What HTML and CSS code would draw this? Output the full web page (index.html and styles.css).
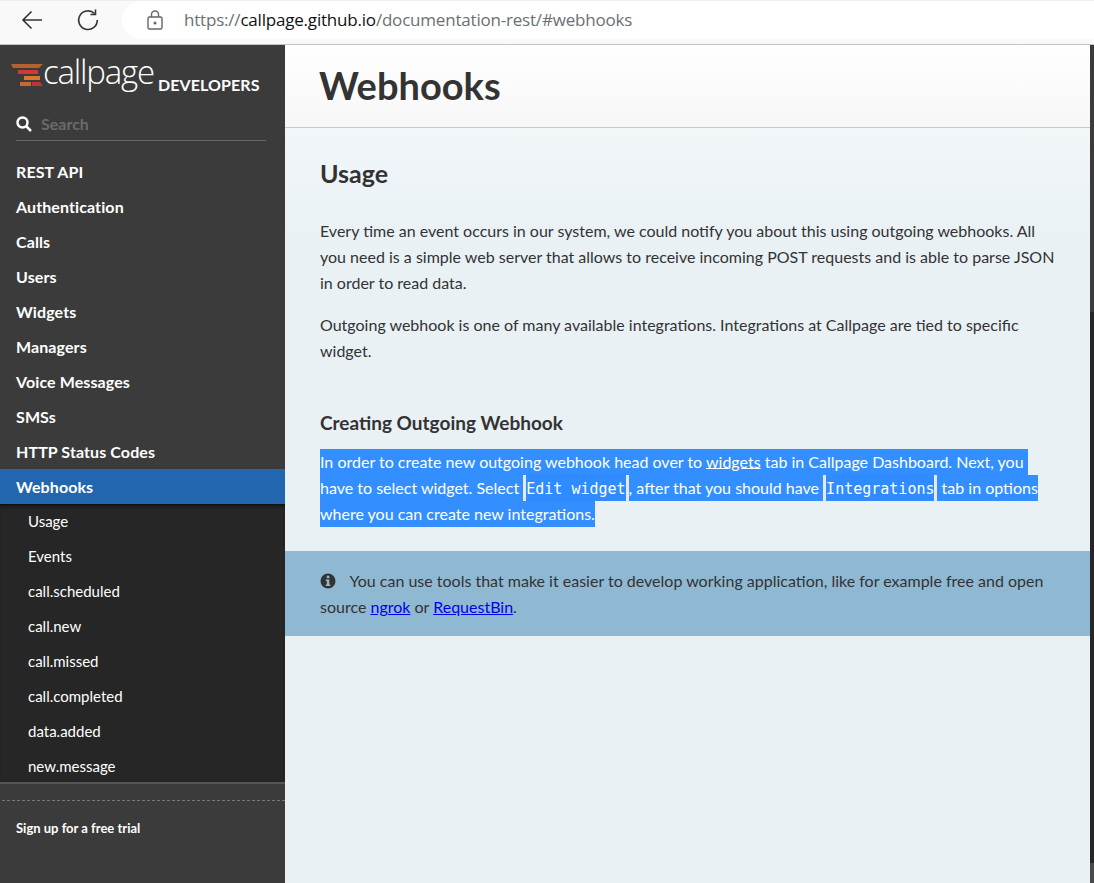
FILE: index.html
```html
<!DOCTYPE html>
<html lang="en">

<head>
    <meta charset="UTF-8">
    <meta name="viewport" content="width=device-width, initial-scale=1.0">
    <title>Webhooks</title>
    <link rel="stylesheet" href="styles.css">
</head>

<body>
    <!-- Browser toolbar -->
    <div class="toolbar">
        <svg class="tool-icon back" width="24" height="24" viewBox="0 0 24 24" fill="none" stroke="#333" stroke-width="1.6">
            <path d="M22 12H3M11.500 3.500L3 12l8.500 8.500" />
        </svg>
        <svg class="tool-icon reload" width="24" height="24" viewBox="0 0 24 24" fill="none" stroke="#333" stroke-width="1.6">
            <path d="M18.500 5.500A9.300 9.300 0 1 0 21.300 12" />
            <path d="M19.500 1.500v5h-5" />
        </svg>
        <div class="address">
            <svg class="lock" width="16" height="20" viewBox="0 0 16 20" fill="none" stroke="#666" stroke-width="1.4">
                <rect x="1" y="7" width="14" height="12" rx="1.500" />
                <path d="M4.500 7V4.500a3.500 3.500 0 0 1 7 0V7" />
                <circle cx="8" cy="13" r="0.800" fill="#666" />
            </svg>
            <span class="url"><span class="url-faded">https://</span>callpage.github.io<span class="url-faded">/documentation-rest/#webhooks</span></span>
        </div>
    </div>

    <div class="page">
        <!-- Sidebar -->
        <nav class="sidebar">
            <div class="logo">
                <svg class="logo-mark" width="33" height="24" viewBox="0 0 33 24">
                    <polygon points="0,0 32,0 28,4 2,4" fill="#b5622f" />
                    <rect x="7" y="6" width="20" height="4" fill="#cf3a35" />
                    <rect x="13" y="12" width="16" height="4" fill="#d9762f" />
                    <rect x="9" y="18" width="11" height="4" fill="#c9682f" />
                    <polygon points="21,18 29,18 32,22 21,22" fill="#c43233" />
                </svg>
                <span class="logo-name">callpage</span>
                <span class="logo-sub">DEVELOPERS</span>
            </div>

            <div class="search">
                <svg width="16" height="16" viewBox="0 0 16 16" fill="none" stroke="#fff" stroke-width="2.500">
                    <circle cx="6.500" cy="6.500" r="5" />
                    <path d="M10.500 10.500L15 15" />
                </svg>
                <span class="search-label">Search</span>
            </div>

            <ul class="menu">
                <li><a href="#">REST API</a></li>
                <li><a href="#">Authentication</a></li>
                <li><a href="#">Calls</a></li>
                <li><a href="#">Users</a></li>
                <li><a href="#">Widgets</a></li>
                <li><a href="#">Managers</a></li>
                <li><a href="#">Voice Messages</a></li>
                <li><a href="#">SMSs</a></li>
                <li><a href="#">HTTP Status Codes</a></li>
                <li><a href="#" class="active">Webhooks</a></li>
            </ul>

            <ul class="submenu">
                <li><a href="#">Usage</a></li>
                <li><a href="#">Events</a></li>
                <li><a href="#">call.scheduled</a></li>
                <li><a href="#">call.new</a></li>
                <li><a href="#">call.missed</a></li>
                <li><a href="#">call.completed</a></li>
                <li><a href="#">data.added</a></li>
                <li><a href="#">new.message</a></li>
            </ul>

            <div class="signup"><a href="#">Sign up for a free trial</a></div>
        </nav>

        <!-- Main content -->
        <main class="content">
            <header class="page-head">
                <h1>Webhooks</h1>
            </header>

            <section class="body">
                <h2>Usage</h2>
                <p>Every time an event occurs in our system, we could notify you about this using outgoing webhooks. All you need is a simple web server that allows to receive incoming POST requests and is able to parse JSON in order to read data.</p>
                <p>Outgoing webhook is one of many available integrations. Integrations at Callpage are tied to specific widget.</p>

                <h3>Creating Outgoing Webhook</h3>
                <p class="selected-text">
                    <span class="sel">In order to create new outgoing webhook head over to <a href="#">widgets</a> tab in Callpage Dashboard. Next, you&nbsp;</span><br>
                    <span class="sel">have to select widget. Select </span><code><span class="sel">Edit widget</span></code><span class="sel">, after that you should have </span><code><span class="sel">Integrations</span></code><span class="sel"> tab in options</span><br>
                    <span class="sel">where you can create new integrations.</span>
                </p>
            </section>

            <aside class="note">
                <svg class="note-icon" width="16" height="16" viewBox="0 0 16 16">
                    <circle cx="8" cy="8" r="7.500" fill="#333" />
                    <rect x="6.800" y="2.800" width="2.600" height="2.400" fill="#8fb8d3" />
                    <path d="M5.800 6.500h3.500v5h1v1.500H5.800v-1.500h1v-3.500h-1z" fill="#8fb8d3" />
                </svg>
                You can use tools that make it easier to develop working application, like for example free and open source <a href="#">ngrok</a> or <a href="#">RequestBin</a>.
            </aside>
        </main>
        <div class="edge"></div>
    </div>
</body>

</html>
```

FILE: styles.css
```css
* {
    box-sizing: border-box;
}

html,
body {
    height: 100%;
}

body {
    margin: 0;
    overflow: hidden;
    display: flex;
    flex-direction: column;
    font-family: Lato, "Liberation Sans", sans-serif;
    font-size: 16px;
    line-height: 26px;
    color: #333;
    background-color: #e9f1f5;
}

/* Browser toolbar */
.toolbar {
    flex: none;
    display: flex;
    align-items: center;
    height: 45px;
    padding-bottom: 5px;
    background-color: #f9f9f9;
    border-top: 1px solid #eee;
    border-bottom: 1px solid #c4c4c4;
}

.tool-icon {
    flex: none;
}

.back {
    margin-left: 20px;
}

.reload {
    margin-left: 32px;
}

.address {
    flex: 1;
    display: flex;
    align-items: center;
    height: 38px;
    margin-left: 22px;
    padding-left: 25px;
    background-color: #fff;
    border-radius: 19px 0 0 19px;
}

.url {
    margin-left: 21px;
    font-family: "Open Sans", sans-serif;
    font-size: 17px;
    letter-spacing: -0.2px;
    color: #111;
}

.url-faded {
    color: #6b6f73;
}

.page {
    flex: 1;
    display: flex;
    min-height: 0;
}

/* Sidebar */
.sidebar {
    flex: none;
    display: flex;
    flex-direction: column;
    width: 285px;
    background-color: #3b3b3b;
    color: #fff;
}

.sidebar a {
    color: #fff;
    text-decoration: none;
}

.logo {
    display: flex;
    align-items: flex-start;
    height: 65px;
    padding: 19px 0 0 11px;
}

.logo-name {
    margin-left: -1px;
    margin-top: -13px;
    font-family: "Open Sans", sans-serif;
    font-weight: 300;
    font-size: 33px;
    line-height: 42px;
    letter-spacing: -1.2px;
}

.logo-sub {
    margin-left: 4px;
    margin-top: 9px;
    font-size: 16px;
    line-height: 24px;
    font-weight: 700;
    letter-spacing: 0.1px;
}

.search {
    display: flex;
    align-items: center;
    gap: 9px;
    height: 31px;
    margin: 0 19px 0 16px;
    padding-bottom: 2px;
    border-bottom: 1px solid #666;
}

.search-label {
    font-size: 16px;
    font-weight: 700;
    color: #6a6a6a;
}

.menu,
.submenu {
    list-style: none;
    margin: 0;
    padding: 0;
}

.menu {
    margin-top: 13px;
}

.menu a {
    display: block;
    height: 35px;
    padding-left: 16px;
    line-height: 35px;
    font-size: 16px;
    font-weight: 700;
    letter-spacing: 0.1px;
}

.menu a.active {
    background-color: #2166ae;
}

.submenu {
    height: 280px;
    background-color: #262626;
    border-top: 1px solid #111;
    border-bottom: 2px solid #555;
    box-shadow: inset 0 4px 4px -3px #111;
}

.submenu a {
    display: block;
    height: 35px;
    padding-left: 28px;
    line-height: 32px;
    font-size: 15px;
}

.signup {
    margin: 16px 0 0 2px;
    padding: 14px 0 0 14px;
    border-top: 1px dashed #777;
    font-size: 13px;
    font-weight: 700;
}

/* Main content */
.content {
    flex: 1;
    min-width: 0;
}

.page-head {
    height: 83px;
    padding: 0 35px;
    background: linear-gradient(#fff, #f7f7f7);
    border-bottom: 1px solid #c8c8c8;
}

h1 {
    margin: 0 0 0 -1px;
    font-size: 38px;
    line-height: 80px;
    font-weight: 700;
}

.body {
    height: 423px;
    padding: 27px 35px 0;
    background: linear-gradient(#f1f6f9, #e9f1f5 120px);
}

h2 {
    margin: 0 0 27px;
    font-size: 25px;
    line-height: 36px;
    font-weight: 700;
}

h3 {
    margin: 45px 0 11px;
    font-size: 19px;
    line-height: 28px;
    font-weight: 700;
}

p {
    margin: 0 0 16px;
}

/* Text that is highlighted in the screenshot */
.selected-text {
    margin: 0;
    color: #fff;
}

.sel {
    padding: 2.500px 0 4.500px;
    background-color: #338fff;
    color: #fff;
}

.sel a {
    color: #fff;
    text-decoration: underline;
}

code {
    padding: 5px 0 3.500px;
    font-family: "DejaVu Sans Mono", monospace;
    font-size: 15px;
    line-height: 1;
    vertical-align: -1px;
    border-left: 3px solid #e8e8e8;
    border-right: 3px solid #e8e8e8;
}

code .sel {
    padding: 5.400px 0 3.400px;
    background-color: #2f8bff;
}

.note {
    height: 85px;
    padding: 17px 35px 0;
    background-color: #8fb8d3;
}

.note a {
    color: #0000ee;
    text-decoration: underline;
}

.note-icon {
    margin-right: 10px;
    vertical-align: -2px;
}

/* Scrollbar strip on the right edge */
.edge {
    flex: none;
    width: 4px;
    background: linear-gradient(#3b3b3b 267px, #262626 267px, #262626 818px, #4a4a4a 818px);
}
```
